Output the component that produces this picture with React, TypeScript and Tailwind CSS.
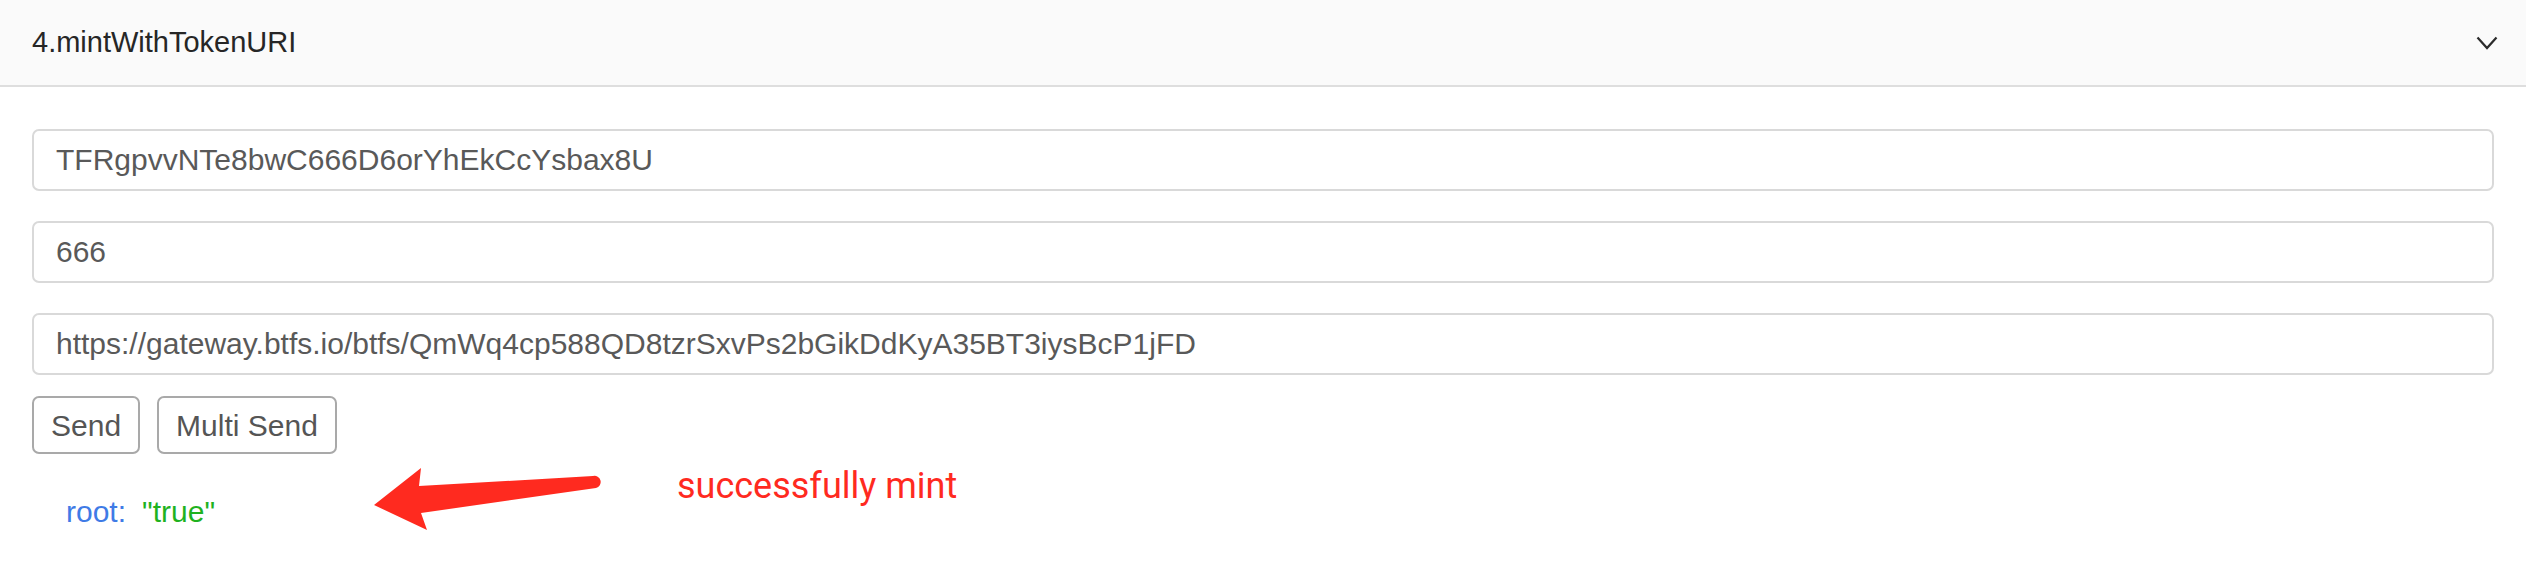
import React from 'react';

const fields = [
  'TFRgpvvNTe8bwC666D6orYhEkCcYsbax8U',
  '666',
  'https://gateway.btfs.io/btfs/QmWq4cp588QD8tzrSxvPs2bGikDdKyA35BT3iysBcP1jFD',
];

const App: React.FC = () => {
  return (
    <div className="relative w-full h-[576px] bg-white overflow-hidden font-['Liberation_Sans',Arial,sans-serif]">
      {/* Collapse header */}
      <div className="h-[87px] bg-[#fafafa] border-b-2 border-[#dedede] flex items-center justify-between pl-[32px] pr-[28px]">
        <span className="text-[29px] text-[#262626] leading-none">4.mintWithTokenURI</span>
        <svg width="22" height="14" viewBox="0 0 22 14" fill="none">
          <polyline points="1.5,1.5 11,12 20.5,1.5" stroke="#2b2b2b" strokeWidth="2.2" />
        </svg>
      </div>

      {/* Body */}
      <div className="px-[32px] pt-[42px]">
        <div className="flex flex-col gap-[30px]">
          {fields.map((v) => (
            <input
              key={v}
              defaultValue={v}
              className="h-[62px] w-full border-2 border-[#d9d9d9] rounded-[7px] px-[22px] text-[30px] text-[#595959] outline-none bg-white"
            />
          ))}
        </div>

        <div className="flex gap-[17px] mt-[21px]">
          <button className="h-[58px] px-[17px] border-2 border-[#a9a9a9] rounded-[7px] bg-white text-[30px] text-[#555]">
            Send
          </button>
          <button className="h-[58px] px-[17px] border-2 border-[#a9a9a9] rounded-[7px] bg-white text-[30px] text-[#555]">
            Multi Send
          </button>
        </div>

        <div className="mt-[43px] pl-[34px] text-[30px] leading-none flex gap-[16px]">
          <span className="text-[#3f7be6]">root:</span>
          <span className="text-[#1fb21f]">"true"</span>
        </div>
      </div>

      {/* Annotation */}
      <svg className="absolute left-[360px] top-[460px]" width="260" height="80" viewBox="0 0 260 80">
        <path d="M14,45 L61,8 L59,26 L233,16 A6,6 0 0 1 236,28 L61,53 L67,70 Z" fill="#ff2a1f" />
      </svg>
      <span className="absolute left-[677px] top-[468px] text-[36px] leading-none text-[#ff2a1f] font-['Roboto',sans-serif]">
        successfully mint
      </span>
    </div>
  );
};

export default App;
